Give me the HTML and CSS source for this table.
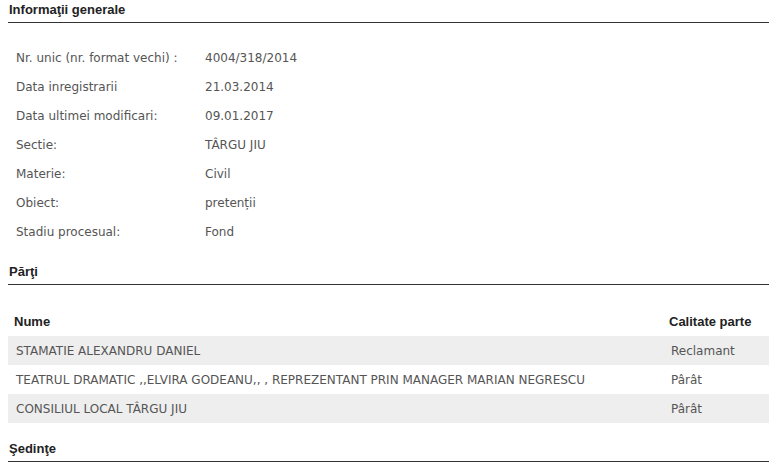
FILE: index.html
```html
<!DOCTYPE html>
<html lang="ro">
<head>
<meta charset="utf-8">
<link rel="stylesheet" href="styles.css">
</head>
<body>
<div class="page">
  <h2 class="section-title">Informaţii generale</h2>
  <div class="info">
    <div class="info-row"><span class="label">Nr. unic (nr. format vechi) :</span><span class="value">4004/318/2014</span></div>
    <div class="info-row"><span class="label">Data inregistrarii</span><span class="value">21.03.2014</span></div>
    <div class="info-row"><span class="label">Data ultimei modificari:</span><span class="value">09.01.2017</span></div>
    <div class="info-row"><span class="label">Sectie:</span><span class="value">TÂRGU JIU</span></div>
    <div class="info-row"><span class="label">Materie:</span><span class="value">Civil</span></div>
    <div class="info-row"><span class="label">Obiect:</span><span class="value">pretenții</span></div>
    <div class="info-row"><span class="label">Stadiu procesual:</span><span class="value">Fond</span></div>
  </div>

  <h2 class="section-title section-gap">Părţi</h2>
  <div class="parties">
    <div class="p-row p-head"><span class="p-name">Nume</span><span class="p-role">Calitate parte</span></div>
    <div class="p-row alt"><span class="p-name">STAMATIE ALEXANDRU DANIEL</span><span class="p-role">Reclamant</span></div>
    <div class="p-row"><span class="p-name">TEATRUL DRAMATIC ,,ELVIRA GODEANU,, , REPREZENTANT PRIN MANAGER MARIAN NEGRESCU</span><span class="p-role">Pârât</span></div>
    <div class="p-row alt"><span class="p-name">CONSILIUL LOCAL TÂRGU JIU</span><span class="p-role">Pârât</span></div>
  </div>

  <h2 class="section-title section-gap">Şedinţe</h2>
</div>
</body>
</html>
```
FILE: styles.css
```css
html, body {
  margin: 0;
  padding: 0;
  background: #fff;
}
.page {
  padding: 0 8px;
  font-family: "DejaVu Sans", Verdana, sans-serif;
  font-size: 12px;
  color: #555;
}
.section-title {
  margin: 0;
  padding: 2px 0 4px 1px;
  font-family: "Liberation Sans", Arial, sans-serif;
  font-size: 13px;
  line-height: 16px;
  font-weight: bold;
  color: #222;
  border-bottom: 1px solid #333;
}
.section-gap { margin-top: 16px; }
.info {
  margin-top: 20px;
  display: flex;
  flex-direction: column;
}
.info-row {
  display: grid;
  grid-template-columns: 197px 1fr;
  height: 29px;
  align-items: center;
}
.info-row .label { padding-left: 8px; }
.parties {
  margin-top: 22px;
  display: flex;
  flex-direction: column;
}
.p-row {
  display: grid;
  grid-template-columns: 1fr 106px;
  height: 29px;
  align-items: center;
}
.p-row .p-name, .p-row .p-role { padding-left: 8px; }
.p-row.alt { background: #eeeeee; }
.p-head {
  font-family: "Liberation Sans", Arial, sans-serif;
  font-size: 13px;
  font-weight: bold;
  color: #222;
}
.p-head .p-name, .p-head .p-role { padding-left: 6px; }
```
